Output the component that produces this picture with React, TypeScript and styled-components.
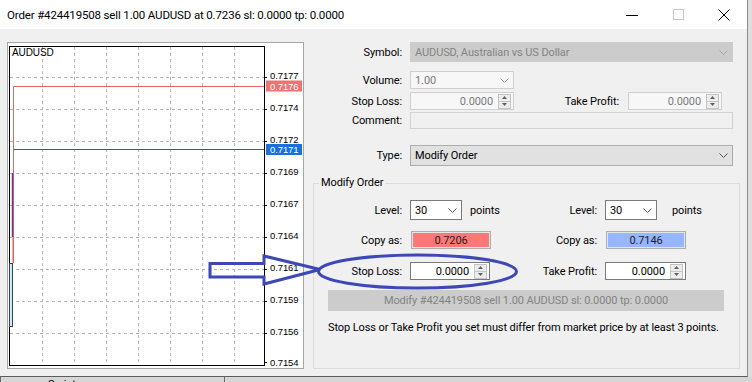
import styled, { createGlobalStyle } from "styled-components"

const GlobalStyle = createGlobalStyle`
  html, body {
    margin: 0;
    padding: 0;
  }
  body {
    background: #dedede;
    font-family: Roboto, "Noto Sans", sans-serif;
    font-size: 11px;
    letter-spacing: -0.1px;
    color: #000;
    overflow: hidden;
  }
`

type Tone = "disabled" | "muted" | "button" | "white"

const tones: Record<Tone, { bg: string; border: string; color: string; arrow: string }> = {
  disabled: { bg: "#cccccc", border: "#cccccc", color: "#838383", arrow: "#a8a8a8" },
  muted: { bg: "#f7f7f7", border: "#cfcfcf", color: "#7a7a7a", arrow: "#a8a8a8" },
  button: { bg: "#e1e1e1", border: "#adadad", color: "#000", arrow: "#505050" },
  white: { bg: "#ffffff", border: "#7a7a7a", color: "#000", arrow: "#505050" },
}

const Page = styled.div`
  width: 752px;
  height: 382px;
  overflow: hidden;
  display: flex;
  flex-direction: column;
`

const Window = styled.div`
  position: relative;
  width: 748px;
  height: 377px;
  box-sizing: border-box;
  background: #f0f0f0;
  border-right: 1px solid #8a8a8a;
  border-bottom: 1px solid #5c5c5c;
  display: flex;
  flex-direction: column;
`

const TitleBar = styled.div`
  height: 29px;
  background: #fff;
  display: flex;
  align-items: center;
  flex: none;
`

const Title = styled.div`
  flex: 1;
  padding-left: 7px;
  font-size: 11.5px;
  letter-spacing: -0.15px;
  white-space: nowrap;
`

const WinButton = styled.div`
  width: 46px;
  height: 29px;
  display: flex;
  align-items: center;
  justify-content: center;
`

const Body = styled.div`
  flex: 1;
  display: flex;
  gap: 6px;
  padding: 13px 0 0 7px;
`

const ChartFrame = styled.div`
  width: 297px;
  height: 327px;
  box-sizing: border-box;
  border: 1px solid #a6a6a6;
  background: #fff;
  flex: none;

  svg {
    display: block;
  }
`

const FormPanel = styled.div`
  display: flex;
  flex-direction: column;
  width: 435px;
`

const Row = styled.div<{ $h: number; $mt: number }>`
  display: flex;
  align-items: center;
  height: ${(p) => p.$h}px;
  margin-top: ${(p) => p.$mt}px;
  flex: none;
`

const Half = styled.div<{ $w?: number }>`
  display: flex;
  align-items: center;
  height: 100%;
  width: ${(p) => (p.$w ? `${p.$w}px` : "auto")};
  flex: none;
`

const Label = styled.div<{ $w: number; $pr?: number }>`
  width: ${(p) => p.$w}px;
  padding-right: ${(p) => p.$pr ?? 8}px;
  box-sizing: border-box;
  text-align: right;
  white-space: nowrap;
  flex: none;
`

const Combo = styled.div<{ $w: number; $tone: Tone }>`
  width: ${(p) => p.$w}px;
  height: 100%;
  box-sizing: border-box;
  display: flex;
  align-items: center;
  justify-content: space-between;
  padding-left: 4px;
  background: ${(p) => tones[p.$tone].bg};
  border: 1px solid ${(p) => tones[p.$tone].border};
  color: ${(p) => tones[p.$tone].color};
  flex: none;
  white-space: nowrap;
`

const Chevron = styled.span`
  width: 18px;
  display: flex;
  justify-content: center;
`

const Spin = styled.div<{ $w: number; $tone: Tone }>`
  width: ${(p) => p.$w}px;
  height: 100%;
  box-sizing: border-box;
  display: flex;
  align-items: center;
  justify-content: flex-end;
  background: ${(p) => tones[p.$tone].bg};
  border: 1px solid ${(p) => tones[p.$tone].border};
  color: ${(p) => tones[p.$tone].color};
  flex: none;
`

const SpinValue = styled.span`
  padding-right: 5px;
`

const SpinButtons = styled.div`
  width: 11px;
  height: 13px;
  margin-right: 2px;
  border: 1px solid #c4c4c4;
  background: #ececec;
  display: flex;
  flex-direction: column;

  span {
    flex: 1;
    display: flex;
    align-items: center;
    justify-content: center;
  }

  span + span {
    border-top: 1px solid #c4c4c4;
  }
`

const Edit = styled.div<{ $w: number }>`
  width: ${(p) => p.$w}px;
  height: 100%;
  box-sizing: border-box;
  background: #f0f0f0;
  border: 1px solid #d2d2d2;
`

const Unit = styled.span<{ $ml: number }>`
  margin-left: ${(p) => p.$ml}px;
`

const ColorButton = styled.div<{ $fill: string }>`
  width: 80px;
  height: 100%;
  margin-left: 1px;
  box-sizing: border-box;
  border: 1px solid #adadad;
  background: ${(p) => p.$fill};
  box-shadow: inset 0 0 0 1px #e6e6e6;
  display: flex;
  align-items: center;
  justify-content: center;
  color: #222;
`

const Group = styled.fieldset`
  margin: 10px 0 0 3px;
  padding: 0;
  min-width: 0;
  width: 427px;
  height: 193px;
  box-sizing: border-box;
  border: 1px solid #dcdcdc;
  display: flex;
  flex-direction: column;
`

const GroupTitle = styled.legend`
  margin-left: 5px;
  padding: 0 2px;
  line-height: 14px;
`

const ActionButton = styled.div`
  width: 396px;
  height: 21px;
  margin: 10px 0 0 14px;
  background: #cccccc;
  color: #838383;
  display: flex;
  align-items: center;
  justify-content: center;
  flex: none;
  white-space: nowrap;
`

const Note = styled.div`
  margin: 10px 0 0 14px;
  line-height: 14px;
  white-space: nowrap;
`

const Overlay = styled.svg`
  position: absolute;
  left: 0;
  top: 0;
  pointer-events: none;
`

const Taskbar = styled.div`
  height: 5px;
  background: #d6d6d6;
  display: flex;
  overflow: hidden;
  flex: none;
`

const TaskCell = styled.div<{ $w: number }>`
  width: ${(p) => p.$w}px;
  box-sizing: border-box;
  border-left: 1px solid #6a6a6a;
  padding-left: 47px;
  line-height: 16px;
  flex: none;
`

function ChevronIcon({ color }: { color: string }) {
  return (
    <svg width="9" height="5" viewBox="0 0 9 5">
      <path d="M0.5 0.5 L4.5 4.5 L8.5 0.5" fill="none" stroke={color} strokeWidth="1" />
    </svg>
  )
}

function Spinner() {
  return (
    <SpinButtons>
      <span>
        <svg width="5" height="3" viewBox="0 0 5 3">
          <path d="M0 3 L2.5 0 L5 3 Z" fill="#606060" />
        </svg>
      </span>
      <span>
        <svg width="5" height="3" viewBox="0 0 5 3">
          <path d="M0 0 L2.5 3 L5 0 Z" fill="#606060" />
        </svg>
      </span>
    </SpinButtons>
  )
}

const gridX = [42, 74, 106, 138, 170, 202, 234]
const priceRows = [
  { y: 77, v: "0.7177" },
  { y: 109, v: "0.7174" },
  { y: 141, v: "0.7172" },
  { y: 173, v: "0.7169" },
  { y: 205, v: "0.7167" },
  { y: 237, v: "0.7164" },
  { y: 269, v: "0.7161" },
  { y: 301, v: "0.7159" },
  { y: 333, v: "0.7156" },
]

function Chart() {
  return (
    <svg width="295" height="325" viewBox="8 43 295 325" fontFamily="'Liberation Sans', sans-serif" fontSize="9.5">
      <g stroke="#b4b4b4" strokeWidth="1" strokeDasharray="3,3" shapeRendering="crispEdges">
        {gridX.map((x) => (
          <line key={x} x1={x + 0.5} y1={47} x2={x + 0.5} y2={365} />
        ))}
        {priceRows.map((r) => (
          <line key={r.v} x1={10} y1={r.y + 0.5} x2={264} y2={r.y + 0.5} />
        ))}
      </g>
      {priceRows.map((r) => (
        <g key={r.v}>
          <line x1={264} y1={r.y + 0.5} x2={267} y2={r.y + 0.5} stroke="#000" />
          <text x={270} y={r.y + 2} fill="#000">{r.v}</text>
        </g>
      ))}
      <text x={270} y={365.5} fill="#000">0.7154</text>
      <line x1={264} y1={362.5} x2={267} y2={362.5} stroke="#000" />

      <rect x={9.5} y={46.5} width={255} height={319} fill="none" stroke="#000" />
      <text x={12} y={56} fill="#000" fontSize="10">AUDUSD</text>

      <line x1={13.5} y1={86.5} x2={264} y2={86.5} stroke="#e36464" />
      <line x1={13.5} y1={86.5} x2={13.5} y2={263} stroke="#e36464" />
      <rect x={266} y={80.5} width={36} height={11} fill="#f07373" />
      <text x={270} y={89.5} fill="#fff">0.7176</text>

      <line x1={13.5} y1={149.5} x2={264} y2={149.5} stroke="#2464a8" />
      <rect x={266} y={144} width={36} height={11} fill="#1a6fdc" />
      <text x={270} y={153} fill="#fff">0.7171</text>

      <line x1={12.5} y1={173} x2={12.5} y2={237} stroke="#5a3ca8" strokeWidth="1.5" />
      <line x1={12.5} y1={237} x2={12.5} y2={263} stroke="#f0a8a8" />
      <rect x={9.5} y={263.5} width={3} height={63} fill="#c8f0f8" stroke="#3a3a5a" />
    </svg>
  )
}

export default function App() {
  return (
    <Page>
      <GlobalStyle />
      <Window>
        <TitleBar>
          <Title>Order #424419508 sell 1.00 AUDUSD at 0.7236 sl: 0.0000 tp: 0.0000</Title>
          <WinButton>
            <svg width="12" height="10" viewBox="0 0 12 10">
              <line x1="0" y1="5.5" x2="12" y2="5.5" stroke="#000" />
            </svg>
          </WinButton>
          <WinButton>
            <svg width="11" height="11" viewBox="0 0 11 11">
              <rect x="0.5" y="0.5" width="10" height="10" fill="none" stroke="#c8c8c8" />
            </svg>
          </WinButton>
          <WinButton>
            <svg width="12" height="12" viewBox="0 0 12 12">
              <path d="M0.5 0.5 L11.5 11.5 M11.5 0.5 L0.5 11.5" stroke="#000" strokeWidth="1" />
            </svg>
          </WinButton>
        </TitleBar>

        <Body>
          <ChartFrame>
            <Chart />
          </ChartFrame>

          <FormPanel>
            <Row $h={20} $mt={0}>
              <Label $w={100}>Symbol:</Label>
              <Combo $w={323} $tone="disabled">
                AUDUSD, Australian vs US Dollar
                <Chevron><ChevronIcon color={tones.disabled.arrow} /></Chevron>
              </Combo>
            </Row>
            <Row $h={18} $mt={9}>
              <Label $w={100}>Volume:</Label>
              <Combo $w={104} $tone="muted">
                1.00
                <Chevron><ChevronIcon color={tones.muted.arrow} /></Chevron>
              </Combo>
            </Row>
            <Row $h={18} $mt={3}>
              <Label $w={100}>Stop Loss:</Label>
              <Spin $w={104} $tone="muted">
                <SpinValue>0.0000</SpinValue>
                <Spinner />
              </Spin>
              <Label $w={114} $pr={9}>Take Profit:</Label>
              <Spin $w={94} $tone="muted">
                <SpinValue>0.0000</SpinValue>
                <Spinner />
              </Spin>
            </Row>
            <Row $h={17} $mt={2}>
              <Label $w={100}>Comment:</Label>
              <Edit $w={323} />
            </Row>
            <Row $h={21} $mt={16}>
              <Label $w={100}>Type:</Label>
              <Combo $w={323} $tone="button">
                Modify Order
                <Chevron><ChevronIcon color={tones.button.arrow} /></Chevron>
              </Combo>
            </Row>

            <Group>
              <GroupTitle>Modify Order</GroupTitle>
              <Row $h={20} $mt={10}>
                <Half $w={196}>
                  <Label $w={96}>Level:</Label>
                  <Combo $w={52} $tone="white">
                    30
                    <Chevron><ChevronIcon color={tones.white.arrow} /></Chevron>
                  </Combo>
                  <Unit $ml={8}>points</Unit>
                </Half>
                <Half>
                  <Label $w={95}>Level:</Label>
                  <Combo $w={52} $tone="white">
                    30
                    <Chevron><ChevronIcon color={tones.white.arrow} /></Chevron>
                  </Combo>
                  <Unit $ml={15}>points</Unit>
                </Half>
              </Row>
              <Row $h={18} $mt={11}>
                <Half $w={196}>
                  <Label $w={96}>Copy as:</Label>
                  <ColorButton $fill="#ff7878">0.7206</ColorButton>
                </Half>
                <Half>
                  <Label $w={95}>Copy as:</Label>
                  <ColorButton $fill="#96b6ff">0.7146</ColorButton>
                </Half>
              </Row>
              <Row $h={18} $mt={13}>
                <Half $w={196}>
                  <Label $w={96}>Stop Loss:</Label>
                  <Spin $w={80} $tone="white">
                    <SpinValue>0.0000</SpinValue>
                    <Spinner />
                  </Spin>
                </Half>
                <Half>
                  <Label $w={95}>Take Profit:</Label>
                  <Spin $w={81} $tone="white">
                    <SpinValue>0.0000</SpinValue>
                    <Spinner />
                  </Spin>
                </Half>
              </Row>
              <ActionButton>Modify #424419508 sell 1.00 AUDUSD sl: 0.0000 tp: 0.0000</ActionButton>
              <Note>Stop Loss or Take Profit you set must differ from market price by at least 3 points.</Note>
            </Group>
          </FormPanel>
        </Body>

        <Overlay width="748" height="377" viewBox="0 0 748 377">
          <path
            d="M210 263.5 L264 263.5 L264 256 L320 269.5 L264 284 L264 277 L210 277 Z"
            fill="none"
            stroke="#3d47b6"
            strokeWidth="3"
            strokeLinejoin="miter"
          />
          <ellipse cx="417.5" cy="271.5" rx="99" ry="16.5" fill="none" stroke="#3d47b6" strokeWidth="3" />
        </Overlay>
      </Window>
      <Taskbar>
        <TaskCell $w={224}>Scripts</TaskCell>
        <TaskCell $w={524} />
      </Taskbar>
    </Page>
  )
}
